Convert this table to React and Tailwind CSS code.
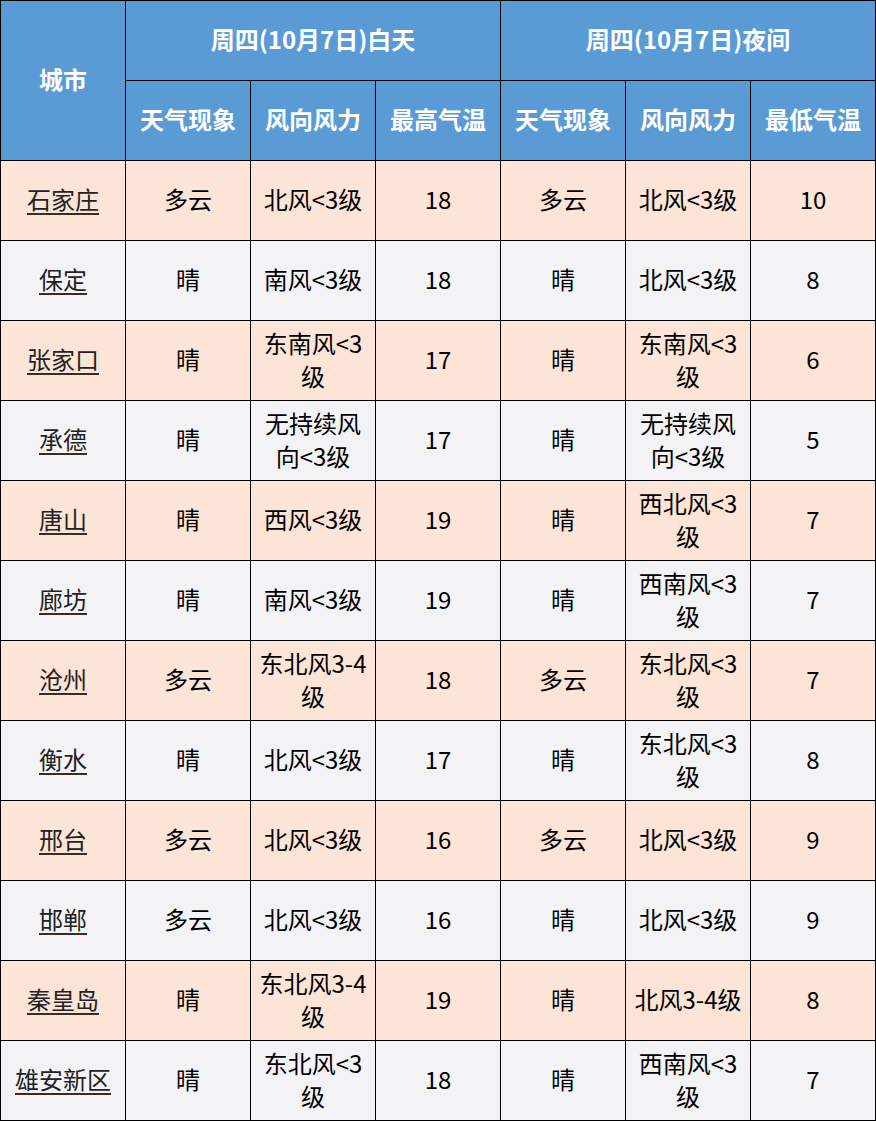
import React from 'react';

const rows = [
  ['石家庄', '多云', '北风<3级', '18', '多云', '北风<3级', '10'],
  ['保定', '晴', '南风<3级', '18', '晴', '北风<3级', '8'],
  ['张家口', '晴', '东南风<3级', '17', '晴', '东南风<3级', '6'],
  ['承德', '晴', '无持续风向<3级', '17', '晴', '无持续风向<3级', '5'],
  ['唐山', '晴', '西风<3级', '19', '晴', '西北风<3级', '7'],
  ['廊坊', '晴', '南风<3级', '19', '晴', '西南风<3级', '7'],
  ['沧州', '多云', '东北风3-4级', '18', '多云', '东北风<3级', '7'],
  ['衡水', '晴', '北风<3级', '17', '晴', '东北风<3级', '8'],
  ['邢台', '多云', '北风<3级', '16', '多云', '北风<3级', '9'],
  ['邯郸', '多云', '北风<3级', '16', '晴', '北风<3级', '9'],
  ['秦皇岛', '晴', '东北风3-4级', '19', '晴', '北风3-4级', '8'],
  ['雄安新区', '晴', '东北风<3级', '18', '晴', '西南风<3级', '7'],
];

const th = 'border border-black bg-[#5b9bd5] text-white font-bold text-[24px] leading-[33px] text-center align-middle h-[80px] px-[5px] pb-[4px]';
const td = 'border border-black text-[24px] leading-[33px] text-center align-middle h-[80px] px-[6px] pb-[4px] text-black';

export default function App() {
  return (
    <div className="w-[876px] bg-white" style={{ fontFamily: '"Noto Sans CJK SC", "Noto Sans", sans-serif' }}>
      <table className="border-collapse table-fixed w-[876px]">
        <colgroup>
          {[0, 1, 2, 3, 4, 5, 6].map((i) => (
            <col key={i} className="w-[125px]" />
          ))}
        </colgroup>
        <thead>
          <tr>
            <th rowSpan={2} className={th}>城市</th>
            <th colSpan={3} className={th}>周四(10月7日)白天</th>
            <th colSpan={3} className={th}>周四(10月7日)夜间</th>
          </tr>
          <tr>
            <th className={th}>天气现象</th>
            <th className={th}>风向风力</th>
            <th className={th}>最高气温</th>
            <th className={th}>天气现象</th>
            <th className={th}>风向风力</th>
            <th className={th}>最低气温</th>
          </tr>
        </thead>
        <tbody>
          {rows.map((r, i) => (
            <tr key={r[0]} className={i % 2 === 0 ? 'bg-[#fce4d6]' : 'bg-[#f3f3f5]'}>
              <td className={td}>
                <span className="underline underline-offset-[4px] decoration-2 decoration-[#3a2c22] text-[#222]">{r[0]}</span>
              </td>
              {r.slice(1).map((c, j) => (
                <td key={j} className={td}>{c}</td>
              ))}
            </tr>
          ))}
        </tbody>
      </table>
    </div>
  );
}
